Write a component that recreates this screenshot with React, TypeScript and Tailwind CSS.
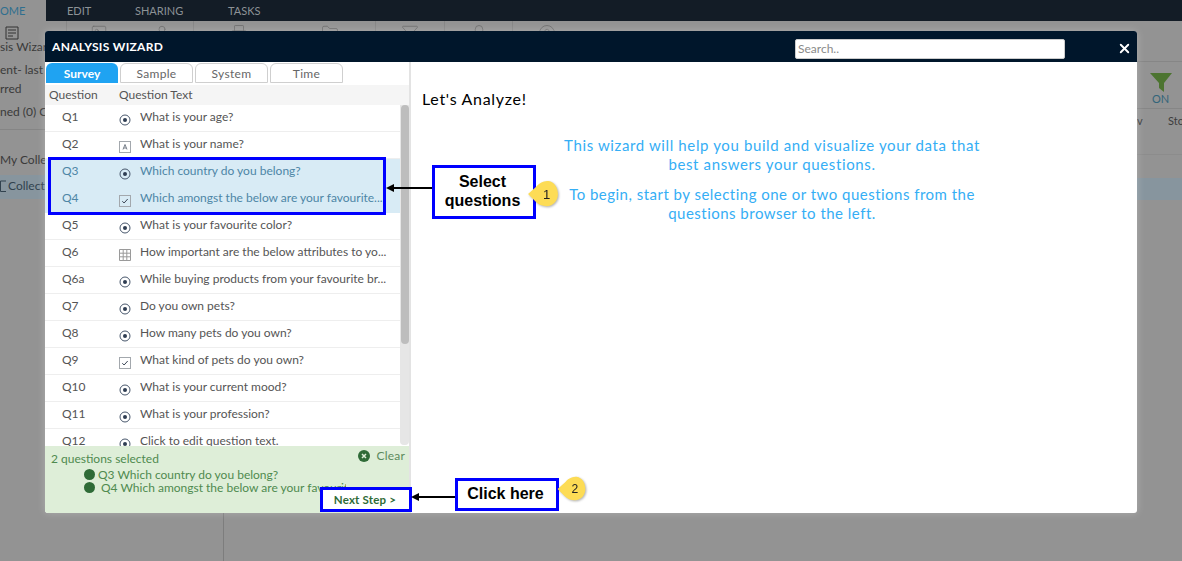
import { CircleHelp, Filter, Folder, Image, Lock, Printer, User, X } from "lucide-react";

type Kind = "radio" | "text" | "check" | "grid";

const questions: { id: string; text: string; kind: Kind; selected?: boolean }[] = [
  { id: "Q1", text: "What is your age?", kind: "radio" },
  { id: "Q2", text: "What is your name?", kind: "text" },
  { id: "Q3", text: "Which country do you belong?", kind: "radio", selected: true },
  { id: "Q4", text: "Which amongst the below are your favourite...", kind: "check", selected: true },
  { id: "Q5", text: "What is your favourite color?", kind: "radio" },
  { id: "Q6", text: "How important are the below attributes to yo...", kind: "grid" },
  { id: "Q6a", text: "While buying products from your favourite br...", kind: "radio" },
  { id: "Q7", text: "Do you own pets?", kind: "radio" },
  { id: "Q8", text: "How many pets do you own?", kind: "radio" },
  { id: "Q9", text: "What kind of pets do you own?", kind: "check" },
  { id: "Q10", text: "What is your current mood?", kind: "radio" },
  { id: "Q11", text: "What is your profession?", kind: "radio" },
  { id: "Q12", text: "Click to edit question text.", kind: "radio" },
];

const tabs = ["Sample", "System", "Time"];

function KindIcon({ kind }: { kind: Kind }) {
  if (kind === "radio") {
    return (
      <svg width="12" height="12" viewBox="0 0 12 12" fill="none">
        <circle cx="6" cy="6" r="5" stroke="#47566b" />
        <circle cx="6" cy="6" r="2" fill="#2f3d52" />
      </svg>
    );
  }
  if (kind === "grid") {
    return (
      <svg width="12" height="12" viewBox="0 0 12 12" fill="none" stroke="#9a9a9a">
        <path d="M.5.5h11v11H.5zM.5 4.2h11M.5 7.8h11M4.2.5v11M7.8.5v11" />
      </svg>
    );
  }
  return (
    <svg width="12" height="12" viewBox="0 0 12 12" fill="none">
      <rect x=".5" y=".5" width="11" height="11" stroke="#a3a8ad" />
      {kind === "check" ? (
        <path d="M3.3 6.2l1.8 1.8 3.6-4" stroke="#3b4656" />
      ) : (
        <path d="M4 8.5l2-5 2 5M4.8 7h2.4" stroke="#56606c" strokeWidth=".8" />
      )}
    </svg>
  );
}

function Callout({ n, w, h }: { n: number; w: number; h: number }) {
  return (
    <svg width={w} height={h} viewBox="0 0 34 30" className="drop-shadow-[1px_1px_1px_rgba(0,0,0,0.3)]">
      <path d="M1 15 L10 7 C14 2 19 1 23 1 C29 2 33 8 33 15 C33 22 28 28 21 28 C16 28 12 26 9 23 Z" fill="#fddc55" />
      <text x="21" y="20" fontSize="14" textAnchor="middle" fill="#222" fontFamily="'Liberation Sans', sans-serif">
        {n}
      </text>
    </svg>
  );
}

function Arrow({ width }: { width: number }) {
  return (
    <svg width={width} height="10" viewBox={`0 0 ${width} 10`}>
      <path d={`M5 5H${width}`} stroke="#000" strokeWidth="2" />
      <path d="M0 5l8-4v8z" fill="#000" />
    </svg>
  );
}

export default function App() {
  return (
    <div className="relative flex h-[561px] w-[1182px] flex-col overflow-hidden bg-[#939393] font-['Lato',sans-serif] text-[12px] text-[#4a4a4a]">
      {/* dimmed page behind the wizard */}
      <div className="flex h-[21px] shrink-0 items-center bg-[#131c26] text-[11px] text-[#8d9296]">
        <span className="flex h-full w-[46px] items-center justify-start bg-[#939393] pt-[2px] text-[#2f6f8f]">OME</span>
        <span className="ml-[21px] w-[68px] pt-[2px]">EDIT</span>
        <span className="w-[93px] pt-[2px]">SHARING</span>
        <span className="pt-[2px]">TASKS</span>
      </div>

      <div className="flex min-h-0 flex-1">
        <div className="flex w-[46px] shrink-0 flex-col whitespace-nowrap text-[12px] text-[#3a3a3a]">
          <div className="mt-[3px] flex h-[14px] pl-[4px] text-[#333]">
            <svg width="16" height="16" viewBox="0 0 16 16" fill="none" stroke="#333">
              <path d="M2 3h12v12H2zM4 6h8M4 9h8M4 12h5" />
            </svg>
          </div>
          <div className="h-[23px]">sis Wizard</div>
          <div className="h-[19px]">ent- last</div>
          <div className="h-[23px]">rred</div>
          <div className="h-[27px] border-b border-[#858585]">ned (0) C</div>
          <div className="mt-[21px] h-[24px]">My Collect</div>
          <div className="flex h-[24px] items-center gap-[2px] bg-[#87959e] pb-[3px] text-[#31424e]">
            <svg width="6" height="13" viewBox="0 0 6 13" fill="none" stroke="#31424e">
              <path d="M6 2H.5v10.5H6" />
            </svg>
            Collect
          </div>
        </div>

        <div className="flex min-w-0 flex-1 flex-col">
          <div className="flex h-[11px] shrink-0 overflow-hidden text-[#666]">
            <div className="w-[21px] border-r border-[#868686]" />
            <div className="flex w-[127px] justify-around border-r border-[#868686] pt-[3px]">
              <Image size={18} strokeWidth={1} />
              <User size={18} strokeWidth={1} />
            </div>
            <div className="flex w-[182px] justify-around border-r border-[#868686] pt-[3px]">
              <Printer size={18} strokeWidth={1} />
              <Folder size={18} strokeWidth={1} />
            </div>
            <div className="flex w-[69px] justify-center border-r border-[#868686] pt-[3px]">
              <Filter size={18} strokeWidth={1} />
            </div>
            <div className="flex w-[68px] justify-center border-r border-[#868686] pt-[3px]">
              <Lock size={18} strokeWidth={1} />
            </div>
            <div className="flex w-[68px] justify-center pt-[3px]">
              <CircleHelp size={18} strokeWidth={1} />
            </div>
          </div>
          <div className="mt-auto ml-[177px] h-[48px] border-l border-[#7d7d7d]" />
        </div>

        <div className="flex w-[45px] shrink-0 flex-col text-[#3d3d3d]">
          <div className="h-[41px] border-b border-[#868686]" />
          <div className="flex h-[47px] flex-col items-start border-b border-[#868686] pl-[13px] pt-[11px]">
            <svg width="22" height="19" viewBox="0 0 22 19" className="shrink-0">
              <path d="M0 0h22l-8 10v9l-5-4v-5z" fill="#4c7430" />
            </svg>
            <span className="ml-[2px] text-[11px] leading-[14px] text-[#32657a]">ON</span>
          </div>
          <div className="flex h-[24px] items-center justify-between text-[11px]">
            <span>v</span>
            <span className="w-[14px] overflow-hidden">Sto</span>
          </div>
          <div className="h-[22px] border-b border-[#8c8c8c]" />
          <div className="h-[23px]" />
          <div className="h-[22px] bg-[#87959e]" />
        </div>
      </div>

      {/* wizard */}
      <div className="absolute top-[31px] left-[45px] flex h-[482px] w-[1092px] flex-col overflow-hidden rounded-[3px] bg-white shadow-[0_0_8px_rgba(255,255,255,0.25)]">
        <div className="flex h-[31px] shrink-0 items-center bg-[#00162b] pl-[7px] text-white">
          <span className="w-[743px] text-[12px] font-bold tracking-[0.3px]">ANALYSIS WIZARD</span>
          <div className="mt-[4px] flex h-[20px] w-[270px] items-center rounded-[2px] border border-[#ccc] bg-white pl-[2px] text-[12px] text-[#8a8a8a]">Search..</div>
          <X size={15} strokeWidth={3} className="mt-[4px] ml-[52px]" />
        </div>

        <div className="flex min-h-0 flex-1">
          <div className="flex w-[366px] shrink-0 flex-col border-r-2 border-[#e3e3e3]">
            <div className="flex h-[23px] shrink-0 items-start gap-[2px] pl-[1px] pt-[1px]">
              <span className="flex h-[20px] w-[72px] items-center justify-center rounded-t-[6px] bg-[#1fa3f2] pt-[1px] text-[12px] font-bold text-white">Survey</span>
              {tabs.map((t) => (
                <span key={t} className="flex h-[20px] w-[73px] items-center justify-center rounded-t-[6px] border border-[#cfcfcf] pt-[1px] text-[12px] tracking-[0.3px] text-[#666]">{t}</span>
              ))}
            </div>
            <div className="flex h-[20px] shrink-0 items-center bg-[#f5f5f5] pl-[4px] text-[12px] text-[#555]">
              <span className="w-[70px]">Question</span>
              <span>Question Text</span>
            </div>
            <div className="relative min-h-0 flex-1 overflow-hidden">
              <div className="mr-[9px]">
                {questions.map((q) => (
                  <div
                    key={q.id}
                    className={`flex h-[27px] items-center whitespace-nowrap border-b text-[12px] ${
                      q.selected ? "border-[#d8ebf5] bg-[#d8ebf5] text-[#4d86a6]" : "border-[#eeeeee] text-[#555]"
                    }`}
                  >
                    <span className="mb-[3px] w-[74px] shrink-0 pl-[17px]">{q.id}</span>
                    <span className="mt-[3px] w-[21px] shrink-0">
                      <KindIcon kind={q.kind} />
                    </span>
                    <span className="mb-[3px]">{q.text}</span>
                  </div>
                ))}
              </div>
              <div className="absolute top-0 right-0 h-[340px] w-[9px] rounded-b-[4px] bg-[#e6e6e6]">
                <div className="mx-auto h-[239px] w-[8px] rounded-[4px] bg-[#bdbdbd]" />
              </div>
              <div className="absolute inset-x-0 bottom-0 h-[67px] bg-[#deeed8] text-[12px] text-[#4f8a4f]">
                <div className="flex items-start justify-between pl-[6px] pr-[4px]">
                  <span className="mt-[4px]">2 questions selected</span>
                  <span className="mt-[1px] flex items-center gap-[6px] pl-[3px] tracking-[0.2px] text-[#5c8a5c]">
                    <svg width="12" height="12" viewBox="0 0 12 12">
                      <circle cx="6" cy="6" r="6" fill="#2f6b37" />
                      <path d="M4 4l4 4M8 4l-4 4" stroke="#deeed8" strokeWidth="1.5" />
                    </svg>
                    Clear
                  </span>
                </div>
                <div className="flex h-[13px] items-center pl-[39px]">
                  <span className="mr-[3px] h-[11px] w-[11px] rounded-full bg-[#2f6b37]" />
                  Q3 Which country do you belong?
                </div>
                <div className="flex h-[13px] w-[301px] items-center overflow-hidden whitespace-nowrap pl-[39px]">
                  <span className="mr-[6px] h-[11px] w-[11px] shrink-0 rounded-full bg-[#2f6b37]" />
                  Q4 Which amongst the below are your favourite...
                </div>
              </div>
            </div>
          </div>

          <div className="flex-1 px-[11px] pt-[25px]">
            <div className="text-[16px] tracking-[0.7px] text-black">Let's Analyze!</div>
            <div className="mt-[25px] w-[700px] text-center text-[15px] leading-[19px] text-[#35aef5]">
              <p className="tracking-[0.62px]">
                This wizard will help you build and visualize your data that
                <br />
                best answers your questions.
              </p>
              <p className="mt-[11px] tracking-[0.48px]">
                To begin, start by selecting one or two questions from the
                <br />
                questions browser to the left.
              </p>
            </div>
          </div>
        </div>
      </div>

      {/* tutorial annotations */}
      <div className="absolute top-[157px] left-[48px] h-[58px] w-[338px] border-[3px] border-[#0000ff]" />
      <div className="absolute top-[183px] left-[386px]">
        <Arrow width={47} />
      </div>
      <div className="absolute top-[165px] left-[432px] flex h-[54px] w-[104px] items-center justify-center border-[3px] border-[#0000ff] bg-white pr-[3px] pb-[2px] text-center font-['Liberation_Sans',sans-serif] text-[16px] leading-[19px] font-bold text-black">
        Select
        <br />
        questions
      </div>
      <div className="absolute top-[180px] left-[526px]">
        <Callout n={1} w={34} h={28} />
      </div>

      <div className="absolute top-[487px] left-[320px] flex h-[25px] w-[92px] items-center justify-center border-[3px] border-[#0000ff] bg-white pr-[2px] text-[11.5px] font-bold tracking-[0.2px] text-[#2f6b37]">
        Next Step &gt;
      </div>
      <div className="absolute top-[492px] left-[411px]">
        <Arrow width={45} />
      </div>
      <div className="absolute top-[478px] left-[455px] flex h-[33px] w-[104px] items-center justify-center border-[3px] border-[#0000ff] bg-white pr-[3px] pb-[1px] font-['Liberation_Sans',sans-serif] text-[16px] font-bold text-black">
        Click here
      </div>
      <div className="absolute top-[476px] left-[556px]">
        <Callout n={2} w={31} h={26} />
      </div>
    </div>
  );
}
